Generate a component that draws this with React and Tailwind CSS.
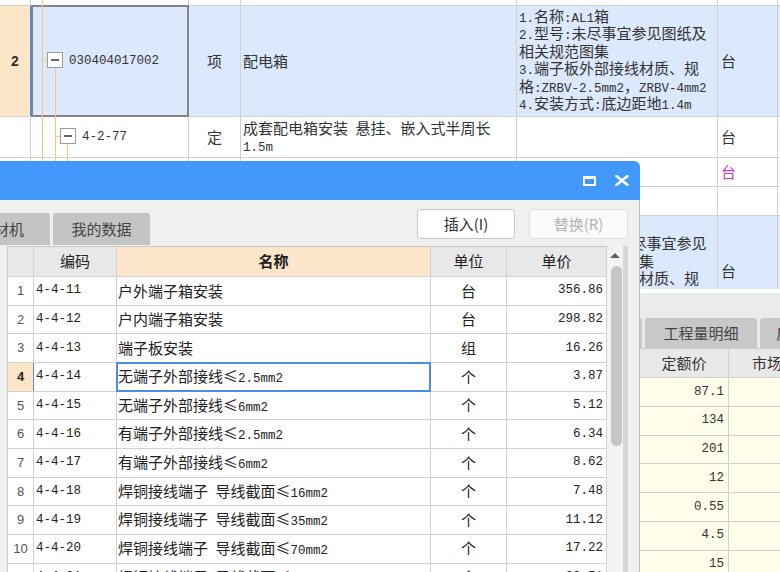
import React from "react";

function Mix({ s }) {
  const parts = s.match(/[\x20-\x7e]+|[^\x20-\x7e]+/g) || [];
  return parts.map((p, i) =>
    /^[\x20-\x7e]+$/.test(p) ? (
      <span key={i} className="font-['Liberation_Mono',monospace] text-[12.5px]">
        {p}
      </span>
    ) : (
      <span key={i}>{p}</span>
    )
  );
}

const B = "border-[#d0d0d0]";

function Lines({ lines }) {
  return lines.map((l, i) => (
    <div key={i} className="h-[17.4px] leading-[17.4px] whitespace-nowrap">
      <Mix s={l} />
    </div>
  ));
}

function TopGrid() {
  const feat2 = [
    "1.名称:AL1箱",
    "2.型号:未尽事宜参见图纸及",
    "相关规范图集",
    "3.端子板外部接线材质、规",
    "格:ZRBV-2.5mm2，ZRBV-4mm2",
    "4.安装方式:底边距地1.4m",
  ];
  const feat6 = [
    "1.名称:AL2箱",
    "2.型号:AL-2箱未尽事宜参见",
    "图纸及相关规范图集",
    "3.端子板外部接线材质、规",
    "格:ZRBV-2.5mm2，ZRBV-4mm2",
    "4.安装方式:底边距地1.4m",
  ];
  return (
    <div className="relative h-[289px] overflow-hidden text-[15px] text-[#333]">
      {/* row 0 */}
      <div className={`flex h-[6px] border-b ${B}`}>
        <div className={`w-[31px] shrink-0 border-r ${B}`} />
        <div className={`w-[158px] shrink-0 border-r ${B}`} />
        <div className={`w-[52px] shrink-0 border-r ${B}`} />
        <div className={`w-[276px] shrink-0 border-r ${B}`} />
        <div className={`w-[201px] shrink-0 border-r ${B}`} />
        <div className={`w-[60px] shrink-0 border-r ${B}`} />
        <div className="flex-1" />
      </div>
      {/* row 2 */}
      <div className={`relative flex h-[111px] border-b ${B} bg-[#dce8fc]`}>
        <div className="w-[31px] shrink-0 border-r border-[#3b8df0] bg-[#fde5c8] flex items-center justify-center font-['Liberation_Sans',sans-serif] font-bold text-[14px] text-[#333]">
          2
        </div>
        <div className={`w-[158px] shrink-0 border-r ${B} flex items-center pl-[38px] text-[#333]`}>
          <span className="font-['Liberation_Mono',monospace] text-[12.5px]">030404017002</span>
        </div>
        <div className={`w-[52px] shrink-0 border-r ${B} flex items-center justify-center`}>项</div>
        <div className={`w-[276px] shrink-0 border-r ${B} flex items-center pl-[2px]`}>配电箱</div>
        <div className={`w-[201px] shrink-0 border-r ${B} pl-[2px] pt-[1px] overflow-hidden`}>
          <Lines lines={feat2} />
        </div>
        <div className={`w-[60px] shrink-0 border-r ${B} flex items-center pl-[3px]`}>台</div>
        <div className="flex-1 flex items-center pl-[2px] text-[#999]">1</div>
        <div className="absolute left-[31px] top-[-1px] w-[158px] h-[112px] border-2 border-[#858585]" />
      </div>
      {/* row 3 */}
      <div className={`flex h-[41px] border-b ${B}`}>
        <div className={`w-[31px] shrink-0 border-r ${B}`} />
        <div className={`w-[158px] shrink-0 border-r ${B} flex items-center pl-[51px]`}>
          <span className="font-['Liberation_Mono',monospace] text-[12.5px]">4-2-77</span>
        </div>
        <div className={`w-[52px] shrink-0 border-r ${B} flex items-center justify-center`}>定</div>
        <div className={`w-[276px] shrink-0 border-r ${B} pl-[2px] pt-[2px]`}>
          <div className="h-[17px] leading-[17px] whitespace-nowrap">
            <Mix s="成套配电箱安装 悬挂、嵌入式半周长" />
          </div>
          <div className="h-[17px] leading-[17px]">
            <Mix s="1.5m" />
          </div>
        </div>
        <div className={`w-[201px] shrink-0 border-r ${B}`} />
        <div className={`w-[60px] shrink-0 border-r ${B} flex items-center pl-[3px]`}>台</div>
        <div className="flex-1 flex items-center pl-[2px]">(</div>
      </div>
      {/* row 4 */}
      <div className={`flex h-[29px] border-b ${B}`}>
        <div className={`w-[31px] shrink-0 border-r ${B}`} />
        <div className={`w-[158px] shrink-0 border-r ${B}`} />
        <div className={`w-[52px] shrink-0 border-r ${B}`} />
        <div className={`w-[276px] shrink-0 border-r ${B}`} />
        <div className={`w-[201px] shrink-0 border-r ${B}`} />
        <div className={`w-[60px] shrink-0 border-r ${B} flex items-center pl-[3px] text-[#c23cc4]`}>台</div>
        <div className="flex-1" />
      </div>
      {/* row 5 */}
      <div className={`flex h-[29px] border-b ${B}`}>
        <div className={`w-[31px] shrink-0 border-r ${B}`} />
        <div className={`w-[158px] shrink-0 border-r ${B}`} />
        <div className={`w-[52px] shrink-0 border-r ${B}`} />
        <div className={`w-[276px] shrink-0 border-r ${B}`} />
        <div className={`w-[201px] shrink-0 border-r ${B}`} />
        <div className={`w-[60px] shrink-0 border-r ${B}`} />
        <div className="flex-1" />
      </div>
      {/* row 6 */}
      <div className={`flex h-[111px] border-b ${B} bg-[#dce8fc]`}>
        <div className={`w-[31px] shrink-0 border-r ${B}`} />
        <div className={`w-[158px] shrink-0 border-r ${B}`} />
        <div className={`w-[52px] shrink-0 border-r ${B} flex items-center justify-center`}>项</div>
        <div className={`w-[276px] shrink-0 border-r ${B} flex items-center pl-[2px]`}>配电箱</div>
        <div className={`w-[201px] shrink-0 border-r ${B} pl-[2px] pt-[1px] overflow-hidden`}>
          <Lines lines={feat6} />
        </div>
        <div className={`w-[60px] shrink-0 border-r ${B} flex items-center pl-[3px]`}>台</div>
        <div className="flex-1 flex items-center pl-[2px]">1</div>
      </div>
      {/* tree connector lines */}
      <svg className="absolute left-0 top-0" width="200" height="289" viewBox="0 0 200 289">
        <g stroke="#f6c68c" strokeWidth="1" fill="none">
          <line x1="42.5" y1="0" x2="42.5" y2="289" />
          <line x1="42" y1="60.5" x2="48" y2="60.5" />
          <line x1="55.5" y1="67" x2="55.5" y2="289" />
          <line x1="55" y1="136.5" x2="61" y2="136.5" />
          <line x1="67.5" y1="143" x2="67.5" y2="289" />
        </g>
        <rect x="47.5" y="52.5" width="15" height="15" fill="#fff" stroke="#9c9c9c" />
        <line x1="51" y1="60" x2="59" y2="60" stroke="#333" strokeWidth="1.5" />
        <rect x="60.5" y="128.5" width="15" height="15" fill="#fff" stroke="#9c9c9c" />
        <line x1="64" y1="136" x2="72" y2="136" stroke="#333" strokeWidth="1.5" />
      </svg>
    </div>
  );
}

function LowerPanel() {
  const vals = ["87.1", "134", "201", "12", "0.55", "4.5", "15"];
  return (
    <div className="border-t-[4px] border-white bg-[#ebebeb] text-[15px]">
      <div className="h-[55px] flex items-end gap-[3px] overflow-hidden">
        <div className="ml-[540px] w-[102px] h-[30px] shrink-0 bg-[#c8c8c8] rounded-t-[3px] flex items-center justify-center text-[#444]">
          清单指引
        </div>
        <div className="w-[112px] h-[30px] shrink-0 bg-[#c8c8c8] rounded-t-[3px] flex items-center justify-center text-[#444]">
          工程量明细
        </div>
        <div className="w-[112px] h-[30px] shrink-0 bg-[#c8c8c8] rounded-t-[3px] flex items-center pl-[16px] text-[#444] whitespace-nowrap">
          反查图形工程量
        </div>
      </div>
      <div className={`flex h-[30px] border-y ${B} bg-[#e8e8e8] text-[#333]`}>
        <div className={`w-[640px] shrink-0 border-r ${B}`} />
        <div className={`w-[89px] shrink-0 border-r ${B} flex items-center justify-center`}>定额价</div>
        <div className="flex-1 flex items-center pl-[23px] whitespace-nowrap">市场价</div>
      </div>
      {vals.map((v) => (
        <div key={v} className={`flex h-[28.75px] border-b ${B} bg-[#fefeea]`}>
          <div className={`w-[640px] shrink-0 border-r ${B}`} />
          <div className={`w-[89px] shrink-0 border-r ${B} flex items-center justify-end pr-[4px] font-['Liberation_Mono',monospace] text-[12.5px] text-[#333]`}>
            {v}
          </div>
          <div className="flex-1" />
        </div>
      ))}
    </div>
  );
}

function Dialog() {
  const rows = [
    [1, "4-4-11", "户外端子箱安装", "台", "356.86"],
    [2, "4-4-12", "户内端子箱安装", "台", "298.82"],
    [3, "4-4-13", "端子板安装", "组", "16.26"],
    [4, "4-4-14", "无端子外部接线≤2.5mm2", "个", "3.87"],
    [5, "4-4-15", "无端子外部接线≤6mm2", "个", "5.12"],
    [6, "4-4-16", "有端子外部接线≤2.5mm2", "个", "6.34"],
    [7, "4-4-17", "有端子外部接线≤6mm2", "个", "8.62"],
    [8, "4-4-18", "焊铜接线端子 导线截面≤16mm2", "个", "7.48"],
    [9, "4-4-19", "焊铜接线端子 导线截面≤35mm2", "个", "11.12"],
    [10, "4-4-20", "焊铜接线端子 导线截面≤70mm2", "个", "17.22"],
    [11, "4-4-21", "焊铜接线端子 导线截面≤120mm2", "个", "22.51"],
  ];
  const C = "border-[#d2d2d2]";
  return (
    <div className="absolute left-0 top-[161px] w-[640px] h-[430px] flex flex-col text-[15px]">
      <div className="h-[39px] shrink-0 bg-[#4299fb] rounded-tr-[6px] flex items-center justify-end gap-[19px] pr-[11px]">
        <svg width="13" height="10" viewBox="0 0 13 10">
          <rect x="1" y="1.5" width="11" height="7.5" fill="none" stroke="#fff" strokeWidth="2" />
          <line x1="0" y1="1.5" x2="13" y2="1.5" stroke="#fff" strokeWidth="3" />
        </svg>
        <svg width="14" height="11" viewBox="0 0 14 11">
          <path d="M1.5 1 L12.5 10 M12.5 1 L1.5 10" stroke="#fff" strokeWidth="2.6" strokeLinecap="round" />
        </svg>
      </div>
      <div className="flex-1 bg-[#f0f0f0] border-r border-[#bdbdbd] flex flex-col">
        <div className="h-[46px] shrink-0 flex justify-between">
          <div className="flex items-end gap-[3px] pb-[1px]">
            <div className="ml-[-47px] w-[97px] h-[32px] shrink-0 bg-[#c4c4c4] rounded-t-[3px] flex items-center justify-center text-[#444]">
              人材机
            </div>
            <div className="w-[97px] h-[32px] shrink-0 bg-[#c4c4c4] rounded-t-[3px] flex items-center justify-center text-[#444]">
              我的数据
            </div>
          </div>
          <div className="flex gap-[14px] mt-[9px] mr-[11px] h-[30px]">
            <div className="w-[98px] h-[30px] bg-white border border-[#c6c6c6] rounded-[3px] flex items-center justify-center text-[#333]">
              插入(I)
            </div>
            <div className="w-[99px] h-[30px] bg-[#fafafa] border border-[#dedede] rounded-[3px] flex items-center justify-center text-[#b4b4b4]">
              替换(R)
            </div>
          </div>
        </div>
        <div className="flex flex-1">
          <div className="w-[7px] shrink-0" />
          <div className="w-[600px] shrink-0 border-l border-t border-[#c8c8c8] bg-white">
            <div className={`flex h-[30px] border-b ${C} bg-[#e8e8e8] text-[#222]`}>
              <div className={`w-[26px] shrink-0 border-r ${C}`} />
              <div className={`w-[83px] shrink-0 border-r ${C} flex items-center justify-center`}>编码</div>
              <div className={`w-[314px] shrink-0 border-r ${C} bg-[#fde6c9] flex items-center justify-center font-bold`}>名称</div>
              <div className={`w-[76px] shrink-0 border-r ${C} flex items-center justify-center`}>单位</div>
              <div className={`w-[100px] shrink-0 border-r ${C} flex items-center justify-center`}>单价</div>
            </div>
            {rows.map(([n, code, name, unit, price]) => {
              const sel = n === 4;
              return (
                <div key={n} className={`flex h-[28.67px] border-b ${C} text-[#222]`}>
                  <div
                    className={
                      sel
                        ? "w-[26px] shrink-0 border-r border-[#4a8fe6] bg-[#fde5c8] flex items-center justify-center font-['Liberation_Sans',sans-serif] font-bold text-[13px] text-[#222]"
                        : `w-[26px] shrink-0 border-r ${C} flex items-center justify-center font-['Liberation_Sans',sans-serif] text-[13px] text-[#555]`
                    }
                  >
                    {n}
                  </div>
                  <div className={`w-[83px] shrink-0 border-r ${C} flex items-center pl-[2px] font-['Liberation_Mono',monospace] text-[12.5px]`}>
                    {code}
                  </div>
                  <div className={`relative w-[314px] shrink-0 border-r ${C} flex items-center pl-[1px] whitespace-nowrap`}>
                    <span>
                      <Mix s={name} />
                    </span>
                    {sel && <div className="absolute left-[-1px] top-[-1px] right-[-1px] bottom-[-1px] border-2 border-[#4a8fe6]" />}
                  </div>
                  <div className={`w-[76px] shrink-0 border-r ${C} flex items-center justify-center`}>{unit}</div>
                  <div className={`w-[100px] shrink-0 border-r ${C} flex items-center justify-end pr-[3px] font-['Liberation_Mono',monospace] text-[12.5px]`}>
                    {price}
                  </div>
                </div>
              );
            })}
          </div>
          <div className="w-[16px] shrink-0 bg-[#f3f3f3] flex flex-col items-center">
            <svg className="mt-[7px]" width="10" height="5" viewBox="0 0 10 5">
              <polygon points="5,0 10,5 0,5" fill="#606060" />
            </svg>
            <div className="mt-[8px] ml-[2px] w-[11px] h-[180px] rounded-full bg-[#c6c6c6]" />
          </div>
          <div className="w-[5px] shrink-0 bg-[#d6d6d6]" />
        </div>
      </div>
    </div>
  );
}

export default function App() {
  return (
    <div className="relative w-[780px] h-[572px] overflow-hidden bg-white text-[#333] font-['Noto_Sans_CJK_SC',sans-serif]">
      <TopGrid />
      <LowerPanel />
      <Dialog />
    </div>
  );
}
